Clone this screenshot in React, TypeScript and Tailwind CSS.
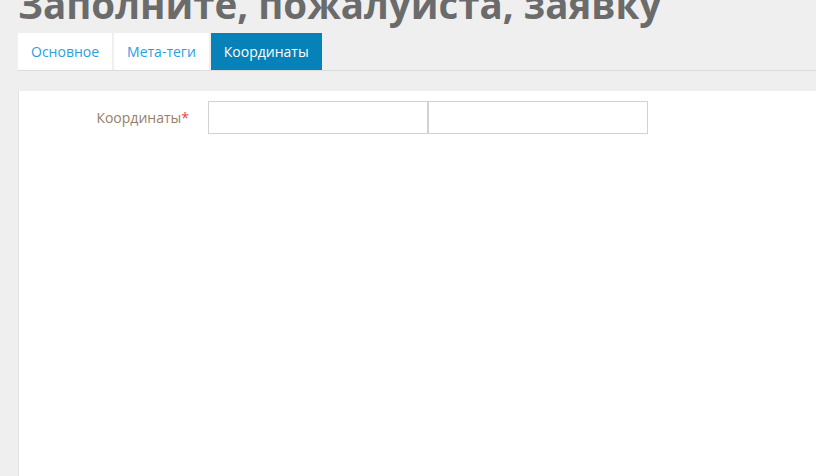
import React, { FC, useState } from 'react';

const tabs = ['Основное', 'Мета-теги', 'Координаты'];

const App: FC = () => {
  const [active, setActive] = useState(2);
  const [lat, setLat] = useState('');
  const [lng, setLng] = useState('');

  return (
    <div className="min-h-[476px] w-[816px] overflow-hidden bg-[#efefef] pl-[18px] font-['Open_Sans',sans-serif]">
      <h1 className="-mt-[15px] whitespace-nowrap text-[38.5px] font-bold leading-[38px] text-[#6b6b6b]">
        Заполните, пожалуйста, заявку
      </h1>

      <div className="mt-[10px] flex gap-[2px] border-b border-[#dcdcdc]">
        {tabs.map((tab, index) => (
          <button
            key={index}
            onClick={() => setActive(index)}
            className={
              index === active
                ? 'h-[37px] bg-[#0782b8] px-[13px] text-[14px] text-white'
                : 'h-[37px] bg-white px-[13px] text-[14px] text-[#2a9fe0]'
            }
          >
            {tab}
          </button>
        ))}
      </div>

      <div className="mt-[20px] h-[385px] border-l border-[#e3e3e3] bg-white pt-[10px]">
        <div className="flex items-center">
          <label className="w-[170px] text-right text-[14px] text-[#957f6b]">
            Координаты<span className="text-[#ee3b3b]">*</span>
          </label>
          <div className="ml-[19px] flex">
            <input
              value={lat}
              onChange={(e) => setLat(e.target.value)}
              className="h-[33px] w-[220px] border border-[#d2d2d2] px-2 text-[13px] outline-none"
            />
            <input
              value={lng}
              onChange={(e) => setLng(e.target.value)}
              className="h-[33px] w-[220px] border border-[#d2d2d2] px-2 text-[13px] outline-none"
            />
          </div>
        </div>
      </div>
    </div>
  );
};

export default App;
